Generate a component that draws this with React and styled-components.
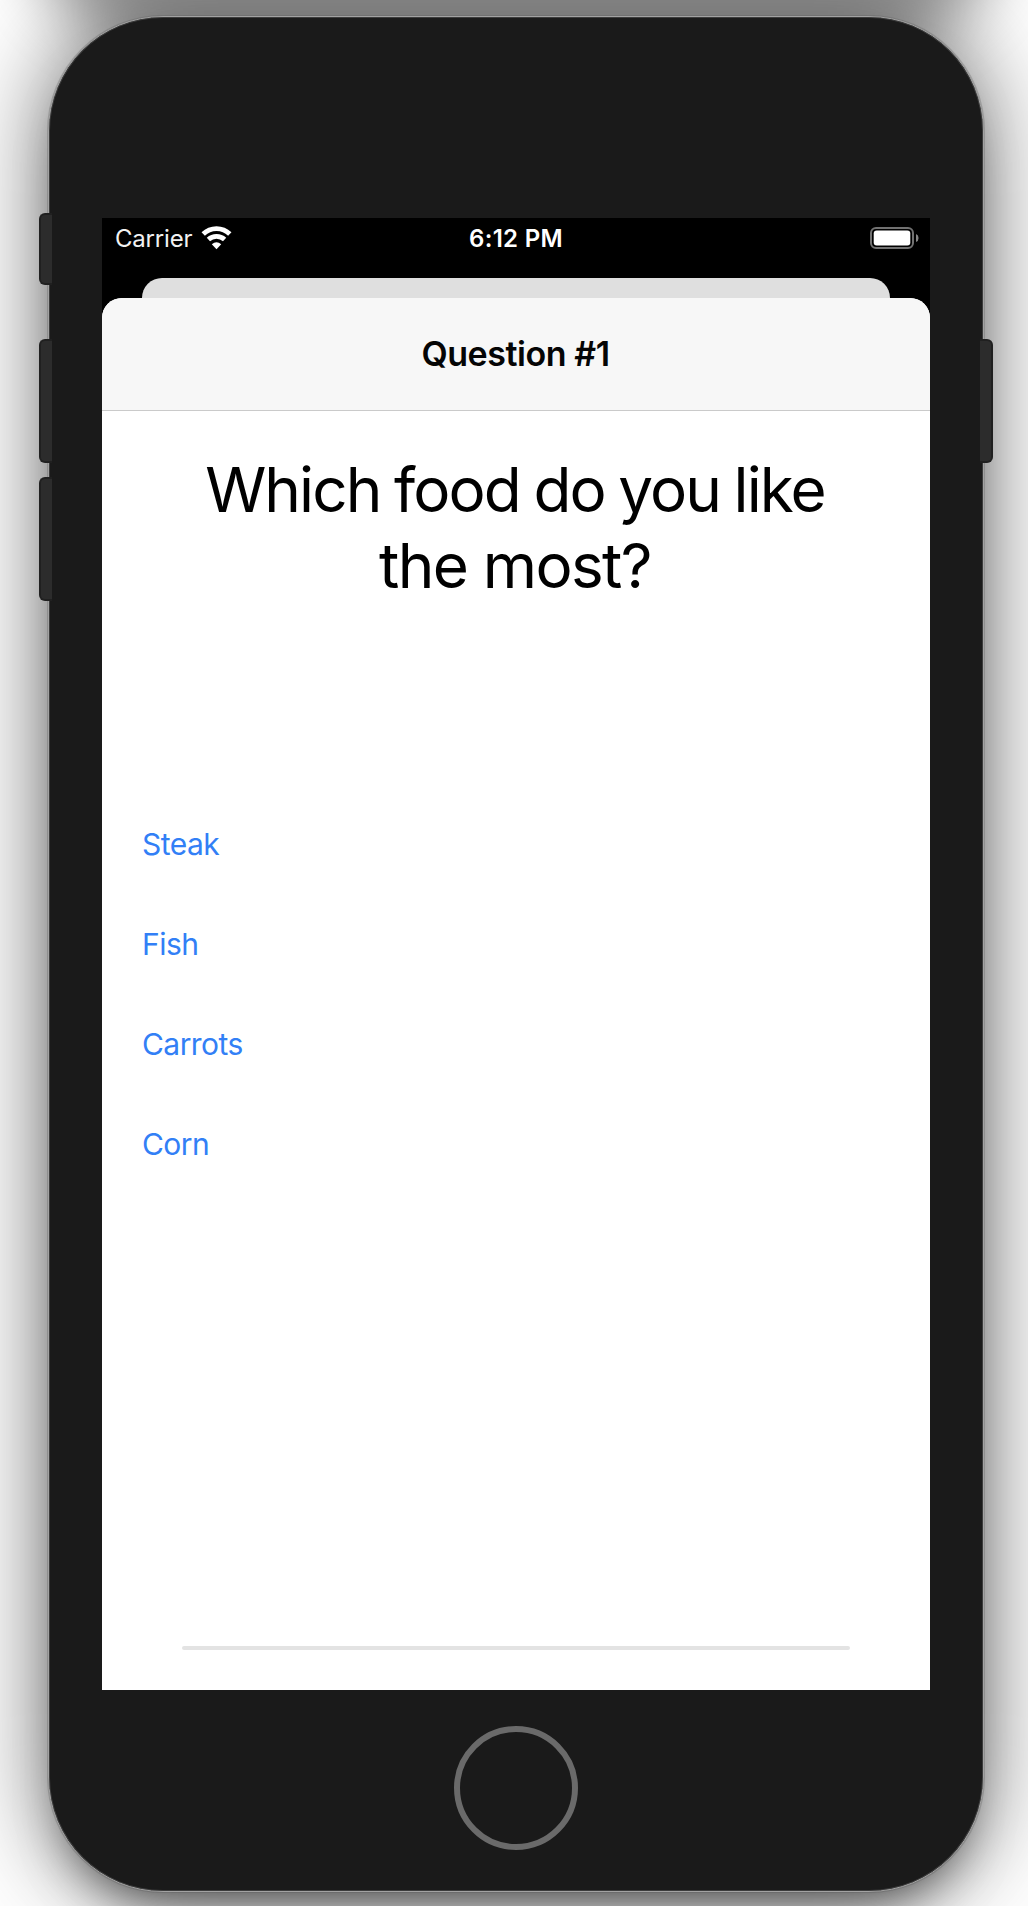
import React from "react";
import styled, { createGlobalStyle } from "styled-components";

const GlobalStyle = createGlobalStyle`
  *, *::before, *::after { box-sizing: border-box; }
  body { margin: 0; background: #fff; }
`;

const Stage = styled.div`
  width: 1028px;
  height: 1906px;
  padding: 16px 0 0 48px;
  overflow: hidden;
  background: #fff;
  font-family: Inter, "Liberation Sans", sans-serif;
`;

const Phone = styled.div`
  position: relative;
  display: flex;
  flex-direction: column;
  align-items: center;
  width: 936px;
  height: 1876px;
  padding-top: 201px;
  border: 1px solid #a2a2a2;
  border-radius: 115px;
  background: #1a1a1a;
  box-shadow:
    inset 0 0 0 1px #3c3c3c,
    0 0 0 1px rgba(90, 90, 90, 0.3),
    0 0 100px rgba(0, 0, 0, 0.58),
    0 -1872px 60px 24px rgba(0, 0, 0, 0.38),
    0 30px 50px -24px rgba(0, 0, 0, 0.6);
`;

const SideButton = styled.div`
  position: absolute;
  top: ${(p) => p.$top}px;
  ${(p) => p.$side}: -10px;
  width: 13px;
  height: ${(p) => p.$height}px;
  background: #2c2c2c;
  border: 2px solid #202020;
  border-${(p) => (p.$side === "left" ? "right" : "left")}: 0;
  border-radius: ${(p) => (p.$side === "left" ? "6px 0 0 6px" : "0 6px 6px 0")};
`;

const Screen = styled.div`
  display: flex;
  flex-direction: column;
  width: 828px;
  height: 1472px;
  background: #000;
`;

const StatusBar = styled.div`
  display: grid;
  grid-template-columns: 1fr auto 1fr;
  align-items: center;
  height: 60px;
  padding: 0 12px 20px 12px;
  color: #fff;
  font-size: 24px;
  line-height: 40px;
`;

const Carrier = styled.div`
  display: flex;
  align-items: center;
  gap: 9px;
  margin-left: 1px;
  color: #f2f2f2;
  letter-spacing: -0.2px;

  svg {
    margin-bottom: 1px;
  }
`;

const Time = styled.div`
  font-weight: 560;
  letter-spacing: 0.3px;
  padding-top: 1px;
`;

const CarrierName = styled.span`
  padding-top: 1px;
`;

const Battery = styled.div`
  justify-self: end;
  display: flex;
  margin: 0 -2px 2px 0;
`;

const BackSheet = styled.div`
  height: 20px;
  margin: 0 40px;
  background: #dfdfdf;
  border-radius: 20px 20px 0 0;
`;

const Sheet = styled.div`
  flex: 1;
  display: flex;
  flex-direction: column;
  background: #fff;
  border-radius: 20px 20px 0 0;
  overflow: hidden;
`;

const Header = styled.div`
  height: 113px;
  display: flex;
  align-items: center;
  justify-content: center;
  padding: 0 1px 2px 0;
  background: #f7f7f7;
  border-bottom: 1px solid #cacaca;
  color: #050505;
  font-size: 34px;
  font-weight: 600;
  letter-spacing: -0.45px;
`;

const Prompt = styled.div`
  display: flex;
  flex-direction: column;
  align-items: center;
  margin-top: 41px;
  padding-right: 2px;
  height: 342px;
  color: #000;
  font-size: 62px;
  line-height: 76px;
`;

const PromptLine = styled.div`
  white-space: nowrap;
  letter-spacing: ${(p) => p.$tracking}px;
  word-spacing: ${(p) => p.$gap}px;
`;

const Options = styled.div`
  display: flex;
  flex-direction: column;
  padding-left: 40px;
`;

const Option = styled.div`
  height: 100px;
  line-height: 100px;
  color: #327ff6;
  font-size: 30px;
  letter-spacing: -0.55px;
`;

const Progress = styled.div`
  width: 668px;
  height: 4px;
  margin: auto auto 40px;
  border-radius: 2px;
  background: #e3e3e3;
`;

const HomeButton = styled.div`
  width: 124px;
  height: 124px;
  margin-top: 36px;
  border: 6px solid #6a6a6a;
  border-radius: 50%;
`;

const WifiIcon = () => (
  <svg width="31" height="24" viewBox="0 0 31 24">
    <path d="M2.2 8 A19 19 0 0 1 28.8 8" fill="none" stroke="#fff" strokeWidth="4.8" />
    <path d="M7.4 13.6 A12 12 0 0 1 23.6 13.6" fill="none" stroke="#fff" strokeWidth="4.8" />
    <path d="M15.5 23.3 L10.8 18.2 Q15.5 14.2 20.2 18.2 Z" fill="#fff" />
  </svg>
);

const BatteryIcon = () => (
  <svg width="50" height="22" viewBox="0 0 50 22">
    <rect x="1" y="1" width="42" height="20" rx="5" fill="none" stroke="#717171" strokeWidth="2" />
    <rect x="3.7" y="3.4" width="36.6" height="15.2" rx="3" fill="#fff" />
    <path d="M46 7 Q48.6 8 48.6 11 Q48.6 14 46 15 Z" fill="#858585" />
  </svg>
);

const sideButtons = [
  { side: "left", top: 196, height: 72 },
  { side: "left", top: 322, height: 124 },
  { side: "left", top: 460, height: 124 },
  { side: "right", top: 322, height: 124 },
];

const promptLines = [
  { text: "Which food do you like", tracking: -1.9, gap: -2 },
  { text: "the most?", tracking: -1.6, gap: -0.5 },
];

const foods = ["Steak", "Fish", "Carrots", "Corn"];

export default function App() {
  return (
    <Stage>
      <GlobalStyle />
      <Phone>
        {sideButtons.map((b) => (
          <SideButton key={b.side + b.top} $side={b.side} $top={b.top} $height={b.height} />
        ))}
        <Screen>
          <StatusBar>
            <Carrier>
              <CarrierName>Carrier</CarrierName>
              <WifiIcon />
            </Carrier>
            <Time>6:12 PM</Time>
            <Battery>
              <BatteryIcon />
            </Battery>
          </StatusBar>
          <BackSheet />
          <Sheet>
            <Header>Question #1</Header>
            <Prompt>
              {promptLines.map((l) => (
                <PromptLine key={l.text} $tracking={l.tracking} $gap={l.gap}>
                  {l.text}
                </PromptLine>
              ))}
            </Prompt>
            <Options>
              {foods.map((f) => (
                <Option key={f}>{f}</Option>
              ))}
            </Options>
            <Progress />
          </Sheet>
        </Screen>
        <HomeButton />
      </Phone>
    </Stage>
  );
}
